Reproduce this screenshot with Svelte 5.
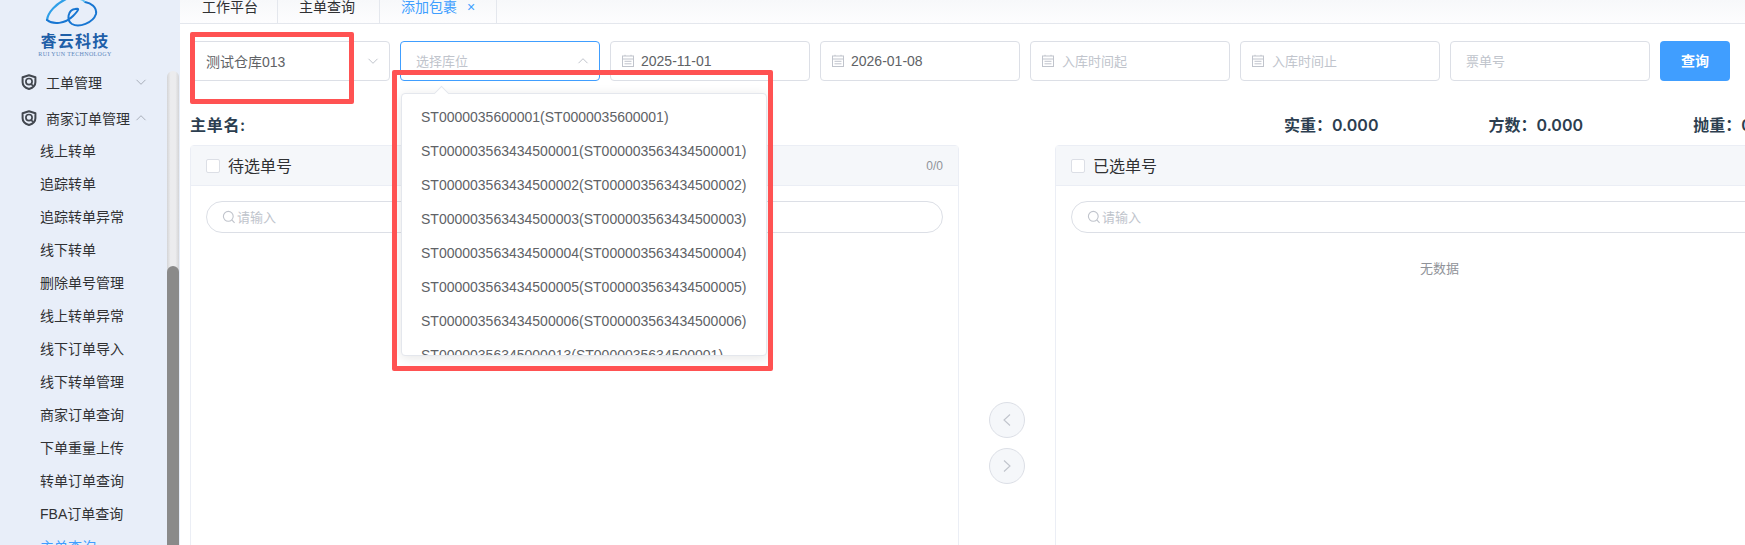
<script>
  const subs = ['线上转单','追踪转单','追踪转单异常','线下转单','删除单号管理','线上转单异常','线下订单导入','线下转单管理','商家订单查询','下单重量上传','转单订单查询','FBA订单查询','主单查询'];
  const options = [
    'ST0000035600001(ST0000035600001)',
    'ST000003563434500001(ST000003563434500001)',
    'ST000003563434500002(ST000003563434500002)',
    'ST000003563434500003(ST000003563434500003)',
    'ST000003563434500004(ST000003563434500004)',
    'ST000003563434500005(ST000003563434500005)',
    'ST000003563434500006(ST000003563434500006)',
    'ST00000356345000013(ST0000035634500001)'
  ];
  const dates = [
    { text: '2025-11-01', ph: false },
    { text: '2026-01-08', ph: false },
    { text: '入库时间起', ph: true },
    { text: '入库时间止', ph: true }
  ];
  const panels = [
    { title: '待选单号', count: '0/0', empty: false },
    { title: '已选单号', count: '', empty: true }
  ];
</script>

{#snippet shield()}
  <svg class="shield" viewBox="0 0 16 16" fill="none">
    <path d="M8 1.2 14.4 3.2V8.2C14.4 11.4 11.6 13.8 8 15 4.4 13.8 1.6 11.4 1.6 8.2V3.2Z" stroke="#42474f" stroke-width="2" stroke-linejoin="round"/>
    <circle cx="8" cy="7.6" r="3.1" stroke="#42474f" stroke-width="1.7"/>
    <path d="M9.8 9.8 12.2 11.8" stroke="#42474f" stroke-width="1.7"/>
  </svg>
{/snippet}

{#snippet chevron(up)}
  <svg class="chev" viewBox="0 0 12 8" fill="none">
    <path d={up ? 'M1.5 6.2 6 1.7 10.5 6.2' : 'M1.5 1.8 6 6.3 10.5 1.8'} stroke="currentColor" stroke-width="1"/>
  </svg>
{/snippet}

{#snippet calendar()}
  <svg class="cal" viewBox="0 0 14 14" fill="none" stroke="#c0c4cc" stroke-width="1">
    <rect x="1.5" y="2" width="11" height="10.5"/>
    <path d="M1.5 5H12.5M3.5 7.3H10.5M3.5 9.8H10.5M4 .8V2M10 .8V2"/>
  </svg>
{/snippet}

<div class="page">
  <aside class="side">
    <div class="logo">
      <svg class="cloud" viewBox="0 0 60 30" fill="none">
        <path d="M4 20C5 12 13 4 23 -1" stroke="#2f9fe8" stroke-width="2.2" stroke-linecap="round"/>
        <path d="M4 20C10 25 22 24 30 16 37 9 36 8 32 9 25 10 23 20 29 24 36 28 50 23 53 14 54 7 48 3 42 2" stroke="#1876d2" stroke-width="2" stroke-linecap="round"/>
        <path d="M42 2C40 0 38 -1 36 -1" stroke="#5fc0f0" stroke-width="1.8"/>
      </svg>
      <div class="brand">睿云科技</div>
      <div class="brand-en">RUI YUN TECHNOLOGY</div>
    </div>
    <nav class="menu">
      <div class="parent">{@render shield()}<span>工单管理</span>{@render chevron(false)}</div>
      <div class="parent">{@render shield()}<span>商家订单管理</span>{@render chevron(true)}</div>
      <ul class="subs">
        {#each subs as s, i}
          <li class:active={i === subs.length - 1}>{s}</li>
        {/each}
      </ul>
    </nav>
    <div class="scroll-track"><div class="scroll-thumb"></div></div>
  </aside>

  <main class="main">
    <div class="tabs">
      <div class="tab t1">工作平台</div>
      <div class="tab t2">主单查询</div>
      <div class="tab t3 on">添加包裹<span class="close">×</span></div>
    </div>

    <div class="content">
      <div class="filters">
        <div class="field select">
          <span>测试仓库013</span>{@render chevron(false)}
          <div class="mark mark-a"></div>
        </div>
        <div class="field select focus">
          <span class="ph">选择库位</span>{@render chevron(true)}
          <div class="drop">
            <i class="arrow"></i>
            <ul>
              {#each options as o}<li>{o}</li>{/each}
            </ul>
          </div>
          <div class="mark mark-b"></div>
        </div>
        {#each dates as d}
          <div class="field date">
            {@render calendar()}
            <span class:ph={d.ph}>{d.text}</span>
          </div>
        {/each}
        <div class="field ticket"><span class="ph">票单号</span></div>
        <div class="btn">查询</div>
      </div>

      <div class="summary">
        <div class="title">主单名:</div>
        <div class="stat">实重：0.000</div>
        <div class="stat">方数：0.000</div>
        <div class="stat">抛重：0.000</div>
      </div>

      <div class="transfer">
        {#each panels as p, i}
          <section class="panel">
            <header>
              <i class="check"></i>
              <span class="ptitle">{p.title}</span>
              <span class="count">{p.count}</span>
            </header>
            <div class="pbody">
              <div class="search">
                <svg viewBox="0 0 14 14" fill="none" stroke="#c0c4cc" stroke-width="1.1"><circle cx="6.3" cy="6.3" r="4.9"/><path d="M9.8 9.8 12.6 12.8"/></svg>
                <span>请输入</span>
              </div>
              {#if p.empty}<p class="empty">无数据</p>{/if}
            </div>
          </section>
          {#if i === 0}
            <div class="moves">
              <div class="round"><svg viewBox="0 0 12 14" fill="none" stroke="#c0c4cc" stroke-width="1.1"><path d="M9 1.5 3 7 9 12.5"/></svg></div>
              <div class="round"><svg viewBox="0 0 12 14" fill="none" stroke="#c0c4cc" stroke-width="1.1"><path d="M3 1.5 9 7 3 12.5"/></svg></div>
            </div>
          {/if}
        {/each}
      </div>
    </div>
  </main>
</div>

<style>
  :global(body) { margin: 0; }
  .page {
    display: flex; width: 1745px; height: 545px; overflow: hidden; background: #fff;
    font-family: "Liberation Sans", "Noto Sans CJK SC", sans-serif; font-size: 14px; color: #606266;
  }
  ul { list-style: none; margin: 0; padding: 0; }

  .side { position: relative; flex: 0 0 180px; height: 545px; background: #e8eef9; overflow: hidden; }
  .logo { height: 64px; display: flex; flex-direction: column; align-items: center; padding-right: 30px; box-sizing: border-box; }
  .logo .cloud { width: 60px; height: 30px; margin-left: -4px; display: block; }
  .brand { font-family: "Liberation Serif", "Noto Sans CJK SC", serif; font-weight: 700; font-size: 16px; line-height: 16px; letter-spacing: 1.2px; color: #1f5fa8; margin-top: 4px; }
  .brand-en { font-family: "Liberation Serif", serif; font-size: 6px; line-height: 7px; letter-spacing: .35px; color: #5b86bd; white-space: nowrap; margin-top: 1px; }
  .parent { display: flex; align-items: center; height: 36px; padding-left: 21px; color: #303133; }
  .parent span { margin-left: 9px; flex: 1; }
  .parent .chev { width: 12px; height: 8px; color: #a9afba; margin-right: 33px; }
  .shield { width: 16px; height: 16px; flex: none; }
  .subs { margin-top: -1px; }
  .subs li { height: 33px; line-height: 33px; padding-left: 40px; color: #303133; white-space: nowrap; }
  .subs li.active { color: #409eff; }
  .scroll-track { position: absolute; left: 167px; top: 71px; width: 12px; height: 480px; border-radius: 6px 6px 0 0; background: linear-gradient(90deg, #d4d4d6, #ececee 30%, #ececee 70%, #d4d4d6); }
  .scroll-thumb { position: absolute; left: 0; right: 0; top: 195px; bottom: 0; border-radius: 6px 6px 0 0; background: #8a8a8a; }

  .main { flex: 1; min-width: 0; display: flex; flex-direction: column; }
  .tabs { height: 23px; flex: none; display: flex; background: linear-gradient(#f7f8fa, #fdfdfe); border-bottom: 1px solid #e4e7ed; }
  .tab { height: 23px; box-sizing: border-box; padding: 0 21px; line-height: 15px; color: #303133; border-right: 1px solid #e4e7ed; white-space: nowrap; }
  .t1 { width: 98px; padding-left: 22px; } .t2 { width: 102px; } .t3 { width: 117px; }
  .on { color: #409eff; }
  .close { margin-left: 10px; font-size: 14px; }

  .content { padding: 17px 0 0 10px; }
  .filters { display: flex; gap: 10px; height: 40px; }
  .field { position: relative; flex: 0 0 200px; box-sizing: border-box; height: 40px; border: 1px solid #dcdfe6; border-radius: 4px; display: flex; align-items: center; background: #fff; }
  .select { padding: 0 10px 0 15px; justify-content: space-between; }
  .select .chev { width: 12px; height: 8px; color: #c0c4cc; }
  .focus { border-color: #409eff; }
  .date { padding-left: 10px; gap: 6px; }
  .ticket { padding-left: 15px; }
  .ph { color: #c0c4cc; font-size: 13px; position: relative; top: -1px; }
  .date .ph { margin-left: 1px; }
  .cal { width: 14px; height: 14px; flex: none; }
  .btn { flex: 0 0 70px; height: 40px; line-height: 40px; text-align: center; background: #409eff; color: #fff; border-radius: 4px; font-weight: 700; }

  .drop { position: absolute; z-index: 3; left: 0; top: 51px; width: 366px; height: 263px; box-sizing: border-box; border: 1px solid #e4e7ed; border-radius: 4px; background: #fff; box-shadow: 0 2px 12px rgba(0,0,0,.1); }
  .drop ul { height: 100%; overflow: hidden; padding-top: 6px; box-sizing: border-box; }
  .drop li { height: 34px; line-height: 34px; padding-left: 19px; white-space: nowrap; color: #606266; }
  .arrow { position: absolute; left: 34px; top: -6px; width: 10px; height: 10px; background: #fff; border: 1px solid #e4e7ed; border-right: 0; border-bottom: 0; transform: rotate(45deg); }

  .mark { position: absolute; z-index: 5; box-sizing: border-box; border: 5px solid #ff5252; border-radius: 2px; pointer-events: none; }
  .mark-a { left: -1px; top: -10px; width: 164px; height: 72px; }
  .mark-b { left: -9px; top: 28px; width: 381px; height: 301px; }

  .summary { display: flex; height: 64px; box-sizing: border-box; padding-top: 21px; align-items: center; font-family: Inter, "Noto Sans CJK SC", sans-serif; font-size: 16px; font-weight: 600; color: #2c3e50; white-space: nowrap; }
  .title { flex: 0 0 1094px; letter-spacing: .7px; }
  .stat { flex: 0 0 204.6px; }

  .transfer { display: flex; width: 1635px; }
  .panel { flex: 0 0 769px; box-sizing: border-box; height: 596px; border: 1px solid #ebeef5; border-radius: 4px; background: #fff; }
  .panel header { height: 40px; box-sizing: border-box; display: flex; align-items: center; padding: 0 15px; background: #f5f7fa; border-bottom: 1px solid #ebeef5; }
  .check { width: 14px; height: 14px; box-sizing: border-box; border: 1px solid #dcdfe6; border-radius: 2px; background: #fff; }
  .ptitle { margin-left: 8px; flex: 1; font-size: 16px; color: #303133; position: relative; top: -1px; }
  .count { font-size: 12px; color: #909399; }
  .pbody { padding: 15px 15px 0; }
  .search { height: 32px; box-sizing: border-box; border: 1px solid #dcdfe6; border-radius: 16px; display: flex; align-items: center; padding-left: 15px; gap: 1px; color: #c0c4cc; font-size: 13px; }
  .search span { position: relative; top: -1px; }
  .search svg { width: 14px; height: 14px; }
  .empty { margin: 26px 0 0; text-align: center; line-height: 20px; font-size: 13px; color: #909399; }
  .moves { flex: 0 0 96px; display: flex; flex-direction: column; align-items: center; justify-content: center; gap: 10px; }
  .round { width: 36px; height: 36px; box-sizing: border-box; border: 1px solid #dcdfe6; border-radius: 50%; background: #f5f7fa; display: flex; align-items: center; justify-content: center; }
  .round svg { width: 12px; height: 14px; }
</style>
